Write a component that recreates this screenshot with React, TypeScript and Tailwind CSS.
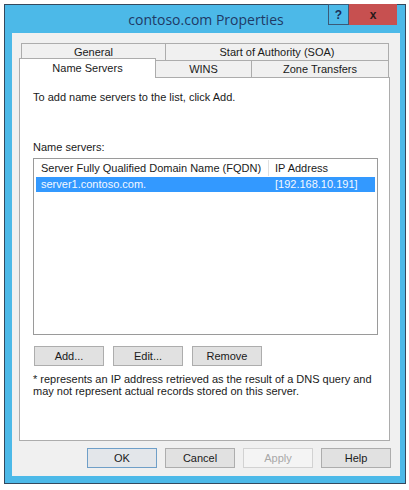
const font = { fontFamily: '"Liberation Sans", Arial, sans-serif' };

function Btn({ label, primary, disabled }: { label: string; primary?: boolean; disabled?: boolean }) {
  let cls = "border-[#adadad] bg-[#e1e1e1] text-[#1a1a1a]";
  if (primary) cls = "border-[#6f9fc8] bg-[#e3e6ea] text-[#1a1a1a]";
  if (disabled) cls = "border-[#d2d2d2] bg-[#f4f4f4] text-[#a8a8a8]";
  return (
    <div className={`flex h-[20px] w-[70px] items-center justify-center border text-[11px] ${cls}`}>
      {label}
    </div>
  );
}

export default function App() {
  return (
    <div className="h-[490px] w-[409px] bg-white pl-[4px] pt-[4px]" style={font}>
      <div className="flex h-[480px] w-[402px] flex-col border border-[#34495e] bg-[#4cb9e8] pb-[7px] pl-[7px] pr-[5px]">
        {/* title bar */}
        <div className="relative flex h-[28px] items-center justify-center">
          <span className="text-[14px] text-[#1f3a66]" style={{ fontFamily: '"Open Sans", "Noto Sans", sans-serif' }}>
            contoso.com Properties
          </span>
          <div className="absolute -top-px right-[3px] flex h-[21px]">
            <div className="flex w-[21px] items-center justify-center border border-[#3b5a78] text-[12px] font-bold text-[#1b2f5a]">
              ?
            </div>
            <div className="flex w-[48px] items-center justify-center bg-[#c75050] text-[12px] font-bold text-[#2a1a1a]">
              x
            </div>
          </div>
        </div>

        {/* dialog body */}
        <div className="flex flex-1 flex-col bg-[#f0f0f0] px-[7px] pt-[10px]">
          {/* tabs */}
          <div className="flex h-[17px] pl-[2px] text-[11px] text-[#1a1a1a]">
            <div className="flex w-[145px] items-center justify-center border border-b-0 border-[#acacac] bg-[#f0f0f0]">
              General
            </div>
            <div className="flex w-[223px] items-center justify-center border border-b-0 border-l-0 border-[#acacac] bg-[#f0f0f0]">
              Start of Authority (SOA)
            </div>
          </div>
          <div className="relative flex h-[17px] text-[11px] text-[#1a1a1a]">
            <div className="relative z-10 -mt-[2px] flex h-[20px] w-[137px] items-start justify-center border border-b-0 border-[#acacac] bg-white pt-[1px]">
              Name Servers
            </div>
            <div className="flex w-[96px] items-center justify-center border border-b-0 border-l-0 border-[#acacac] bg-[#f0f0f0]">
              WINS
            </div>
            <div className="flex w-[137px] items-center justify-center border border-b-0 border-l-0 border-[#acacac] bg-[#f0f0f0]">
              Zone Transfers
            </div>
          </div>

          {/* tab panel */}
          <div className="flex h-[364px] w-[371px] flex-col border border-[#acacac] bg-white pl-[13px] pt-[11px] text-[11px] text-[#1a1a1a]">
            <div className="leading-[16px]">To add name servers to the list, click Add.</div>
            <div className="mt-[34px] leading-[16px]">Name servers:</div>
            <div className="mt-[3px] flex h-[177px] w-[345px] flex-col border border-[#9a9a9a] bg-white">
              <div className="flex h-[18px] items-center">
                <div className="w-[235px] border-r border-[#e0e0e0] pl-[7px]">Server Fully Qualified Domain Name (FQDN)</div>
                <div className="pl-[6px]">IP Address</div>
              </div>
              <div className="mx-[2px] flex h-[15px] items-center bg-[#3399ff] text-[#f4f8ff]">
                <div className="w-[233px] pl-[5px]">server1.contoso.com.</div>
                <div className="pl-[6px]">[192.168.10.191]</div>
              </div>
            </div>
            <div className="mt-[11px] flex gap-[9px] pl-px">
              <Btn label="Add..." />
              <Btn label="Edit..." />
              <Btn label="Remove" />
            </div>
            <div className="mt-[7px] w-[350px] leading-[12px]">
              * represents an IP address retrieved as the result of a DNS query and may not represent actual records stored on this server.
            </div>
          </div>

          {/* dialog buttons */}
          <div className="mt-[7px] flex justify-end gap-[8px] pr-[2px]">
            <Btn label="OK" primary />
            <Btn label="Cancel" />
            <Btn label="Apply" disabled />
            <Btn label="Help" />
          </div>
        </div>
      </div>
    </div>
  );
}
